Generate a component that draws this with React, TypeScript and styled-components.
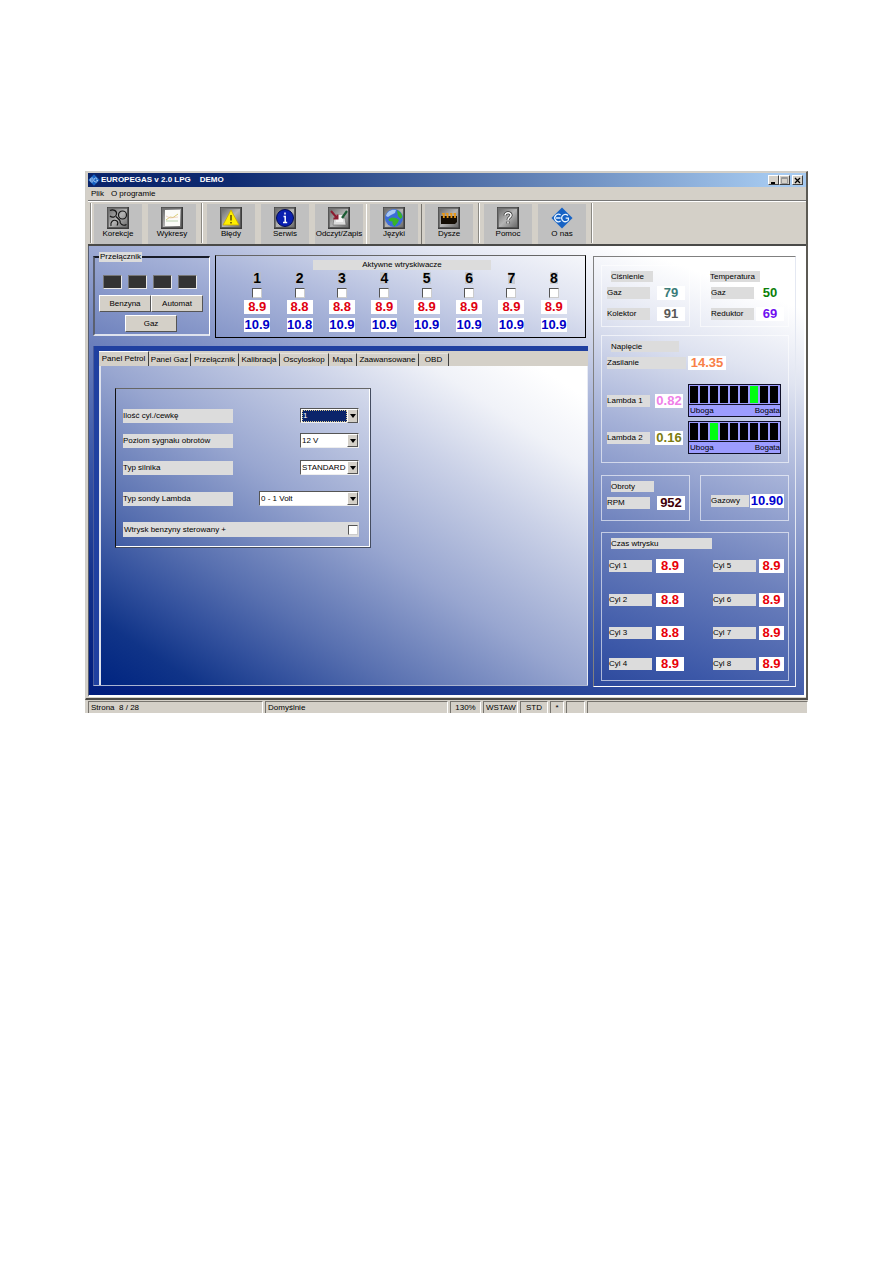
import React from 'react';
import styled, { createGlobalStyle } from 'styled-components';

const face = '#d4d0c8';
const labelGrey = '#dcdcdc';

const GlobalStyle = createGlobalStyle`
  * { box-sizing: border-box; }
  body {
    margin: 0;
    background: #fff;
    color: #000;
    font-family: "Liberation Sans", Arial, sans-serif;
    font-size: 8px;
    line-height: 10px;
  }
  button, select, input { font: inherit; color: inherit; }
`;

const Page = styled.main`
  padding: 171px 85px 40px;
`;

const Window = styled.section`
  background: ${face};
  border: 1px solid #d0cec8;
  border-right: 2px solid #5c5a54;
  border-bottom: 2px solid #4c4a46;
  padding: 1px 0 1px 2px;
`;

const TitleBar = styled.header`
  display: flex;
  align-items: center;
  height: 14px;
  padding: 0 3px 0 0;
  gap: 1px;
  background: linear-gradient(90deg, #0a246a 0%, #0e2a70 20%, #a6caf0 96%);
`;

const Title = styled.h1`
  flex: 1;
  margin: 0;
  font-size: 8px;
  line-height: 12px;
  font-weight: bold;
  color: #fff;
  white-space: pre;
`;

const WindowButtons = styled.div`
  display: flex;
  > :last-child { margin-left: 2px; }
`;

const WindowButton = styled.button`
  display: grid;
  place-items: center;
  width: 11px;
  height: 10px;
  padding: 0;
  background: ${face};
  border: 1px solid;
  border-color: #fff #404040 #404040 #fff;
`;

const MenuBar = styled.nav`
  display: flex;
  gap: 7px;
  height: 14px;
  padding: 2px 3px;
  border-bottom: 1px solid #777;
`;

const MenuLink = styled.a`
  color: #000;
  text-decoration: none;
`;

const Toolbar = styled.div`
  display: flex;
  gap: 6px;
  height: 45px;
  padding: 2px 6px 1px 1px;
  border-top: 1px solid #fff;
  border-bottom: 2px solid #4a4a48;
`;

const ToolSeparator = styled.span`
  width: 2px;
  margin: -1px -2px 0 -1px;
  border-left: 1px solid #8a8882;
  border-right: 1px solid #fff;
  &:first-child { margin: -1px -4px 0 1px; }
`;

const ToolButton = styled.button<{ $raised?: boolean }>`
  display: flex;
  flex-direction: column;
  align-items: center;
  width: 48px;
  height: 40px;
  margin: 0 ${(p) => (p.$raised ? 1 : 0)}px;
  padding: 3px 0 0;
  border: 0;
  background: #c0c0c0;
  box-shadow: ${(p) => (p.$raised
    ? '-3px 0 0 #d4d0c8, 3px 0 0 #d4d0c8, -4px 0 0 #fff, 4px 0 0 #77746e'
    : 'none')};
  font-size: 8px;
  line-height: 10px;
  white-space: nowrap;
  > svg { display: block; flex: none; }
`;

const Workspace = styled.div`
  display: flex;
  align-items: flex-start;
  gap: 5px;
  padding: 6px 8px 8px 4px;
  border-left: 1px solid #555c70;
  border-right: 2px solid #fff;
  border-bottom: 2px solid #fff;
  background: linear-gradient(
    20deg,
    #001c7c 0%, #12308a 16%, #3c58a8 34%, #6c80bc 50%, #a6b2d8 66%, #e0e4f1 80%, #fff 91%
  );
`;

const MainColumn = styled.div`
  flex: 1;
  min-width: 0;
`;

const TopRow = styled.div`
  display: flex;
  align-items: flex-start;
  gap: 5px;
  padding-right: 2px;
`;

const SwitchGroup = styled.fieldset`
  width: 117px;
  margin: 0;
  padding: 13px 6px 2px 4px;
  min-width: 0;
  border: 2px solid;
  border-width: 2px 1px 2px 2px;
  border-color: #181c28 #fff #dfe3ee #5a6070;
`;

const SwitchLegend = styled.legend`
  padding: 0 1px;
  background: ${labelGrey};
`;

const Lamps = styled.div`
  display: flex;
  gap: 6px;
  padding: 0 4px;
`;

const Lamp = styled.span`
  width: 19px;
  height: 14px;
  background: #333;
  border: 1px solid;
  border-color: #777 #e8e8e8 #e8e8e8 #777;
`;

const SwitchButtons = styled.div`
  display: flex;
  flex-wrap: wrap;
  justify-content: center;
  row-gap: 3px;
  padding-top: 6px;
`;

const PushButton = styled.button`
  width: 52px;
  height: 17px;
  padding: 0;
  background: ${face};
  border: 1px solid;
  border-color: #fff #555 #555 #fff;
`;

const Injectors = styled.section`
  flex: 1;
  display: flex;
  flex-direction: column;
  height: 83px;
  margin-top: 3px;
  padding: 4px 10px 0 20px;
  border: 1px solid #000;
  border-top-color: #666;
`;

const InjectorsTitle = styled.h2`
  width: 178px;
  margin: 0 0 0 77px;
  background: ${labelGrey};
  font-size: 8px;
  font-weight: normal;
  line-height: 10px;
  text-align: center;
`;

const InjectorGrid = styled.div`
  display: grid;
  grid-template-columns: repeat(8, 1fr);
`;

const Injector = styled.label`
  display: flex;
  flex-direction: column;
  align-items: center;
`;

const InjectorNumber = styled.span`
  margin: 2px 0 4px;
  background: rgba(190, 190, 190, 0.6);
  font-size: 14px;
  line-height: 12px;
  font-weight: bold;
`;

const Tick = styled.input`
  appearance: none;
  width: 10px;
  height: 10px;
  margin: 0;
  background: #fff;
  border: 1px solid;
  border-color: #555 #ccc #ccc #555;
  &:checked { background: #224; }
`;

const Value = styled.output<{ $color: string; $width?: number }>`
  display: block;
  width: ${(p) => p.$width ?? 28}px;
  height: 14px;
  background: #fff;
  color: ${(p) => p.$color};
  font-size: 13px;
  line-height: 14px;
  font-weight: bold;
  text-align: center;
  white-space: nowrap;
`;

const InjectorValues = styled.span`
  display: grid;
  gap: 4px;
  margin-top: 2px;
`;

const TabPanelFrame = styled.section`
  margin-top: 8px;
  padding: 5px 0 0 5px;
  background: #2040a0;
  border-left: 1px solid #4a5c9c;
  border-bottom: 1px solid #aab4d0;
`;

const TabStrip = styled.div`
  display: flex;
  align-items: flex-end;
  height: 15px;
  background: ${face};
`;

const Tab = styled.button<{ $width: number; $selected?: boolean }>`
  width: ${(p) => p.$width}px;
  height: ${(p) => (p.$selected ? 15 : 13)}px;
  padding: 0;
  border: 0;
  border-right: 1px solid #404040;
  border-top: 1px solid ${(p) => (p.$selected ? '#fff' : '#e4e2dc')};
  background: ${face};
  text-align: center;
  white-space: nowrap;
`;

const TabPanel = styled.div`
  min-height: 319px;
  padding: 22px 14px;
  border-left: 2px solid #dfe3ee;
  border-right: 1px solid #e8ebf4;
  background: linear-gradient(
    to top right,
    #002480 0%, #103488 10%, #34529e 20%, #5870b0 30%, #98a6d0 50%, #cad1e7 70%, #f0f2f8 84%, #fff 95%
  );
`;

const FormBox = styled.form`
  display: grid;
  grid-template-rows: 25px 27px 31px 30px 15px;
  width: 256px;
  padding: 20px 11px 10px 7px;
  border: 1px solid;
  border-color: #666 #444c60 #444c60 #111;
  box-shadow: inset -1px -1px 0 #fff;
`;

const FormRow = styled.div`
  display: flex;
  align-items: flex-start;
  justify-content: space-between;
`;

const FieldLabel = styled.label`
  width: 110px;
  height: 14px;
  background: ${labelGrey};
  line-height: 14px;
  white-space: nowrap;
`;

const TickLabel = styled.label`
  flex: 1;
  display: flex;
  align-items: center;
  justify-content: space-between;
  height: 15px;
  padding: 0 1px;
  background: ${labelGrey};
`;

const SelectFrame = styled.span<{ $width: number }>`
  display: grid;
  grid-template-columns: 1fr 11px;
  width: ${(p) => p.$width}px;
  height: 15px;
  margin-top: -1px;
  background: #fff;
  border: 1px solid;
  border-color: #555 #eee #eee #555;
`;

const SelectBox = styled.select<{ $active?: boolean }>`
  grid-area: 1 / 1 / 2 / 3;
  appearance: none;
  min-width: 0;
  margin: 1px 11px 1px 1px;
  padding: 0;
  border: ${(p) => (p.$active ? '1px dotted #d8c890' : '0')};
  border-radius: 0;
  outline: 0;
  background: ${(p) => (p.$active ? '#0a246a' : '#fff')};
  color: ${(p) => (p.$active ? '#fff' : '#000')};
`;

const SelectArrow = styled.span`
  grid-area: 1 / 2;
  display: grid;
  place-items: center;
  pointer-events: none;
  background: ${face};
  border: 1px solid;
  border-color: #fff #555 #555 #fff;
`;

const Readings = styled.aside`
  display: grid;
  grid-template-columns: 1fr 1fr;
  column-gap: 10px;
  width: 203px;
  margin-top: 4px;
  padding: 8px 6px 5px 7px;
  border: 1px solid;
  border-color: #808080 #e4e8f2 #fff #808080;
`;

const Group = styled.section<{ $wide?: boolean; $height: number; $after?: number }>`
  grid-column: ${(p) => (p.$wide ? '1 / 3' : 'auto')};
  height: ${(p) => p.$height}px;
  margin-bottom: ${(p) => p.$after ?? 0}px;
  padding: 5px 4px 0 5px;
  border: 1px solid rgba(255, 255, 255, 0.6);
`;

const GroupTitle = styled.h2<{ $width: number }>`
  width: ${(p) => p.$width}px;
  margin: 0 0 4px 4px;
  background: ${labelGrey};
  font-size: 8px;
  font-weight: normal;
  line-height: 11px;
`;

const Reading = styled.div<{ $before?: number; $indent?: number }>`
  display: flex;
  align-items: center;
  justify-content: space-between;
  height: 14px;
  margin-top: ${(p) => p.$before ?? 0}px;
  padding-left: ${(p) => p.$indent ?? 0}px;
`;

const ReadingLabel = styled.span<{ $width?: number }>`
  width: ${(p) => p.$width ?? 43}px;
  height: 12px;
  background: ${labelGrey};
  line-height: 12px;
  white-space: nowrap;
`;

const SupplyReading = styled(Reading)`
  justify-content: flex-start;
  gap: 2px;
  margin-bottom: 14px;
`;

const LambdaReading = styled.div`
  display: flex;
  align-items: center;
  gap: 5px;
  height: 33px;
  margin: 0 3px 4px 0;
`;

const Gauge = styled.div`
  flex: 1;
  background: #9c9cff;
  border: 1px solid #101028;
`;

const GaugeCells = styled.div`
  display: grid;
  grid-template-columns: repeat(9, 8px);
  gap: 2px;
  height: 20px;
  padding: 1px;
  border-bottom: 1px solid #101028;
`;

const GaugeCell = styled.span<{ $on: boolean }>`
  background: ${(p) => (p.$on ? '#00ff10' : '#000')};
`;

const GaugeScale = styled.div`
  display: flex;
  justify-content: space-between;
  height: 11px;
  padding-left: 1px;
  line-height: 11px;
`;

const Cylinders = styled.div`
  display: grid;
  grid-template-columns: 75px 71px;
  grid-template-rows: 34px 33px 31px 15px;
  justify-content: space-between;
  padding: 6px 0 0 2px;
`;

const StatusBar = styled.footer`
  display: flex;
  gap: 2px;
  height: 13px;
  padding: 1px 0 0 3px;
  background: ${face};
`;

const StatusCell = styled.span<{ $width?: number; $centered?: boolean }>`
  flex: ${(p) => (p.$width ? 'none' : '1')};
  width: ${(p) => (p.$width ? `${p.$width}px` : 'auto')};
  padding: 0 2px;
  border: 1px solid;
  border-width: 1px 1px 0;
  border-color: #77746e #fff #fff #77746e;
  line-height: 12px;
  text-align: ${(p) => (p.$centered ? 'center' : 'left')};
  white-space: pre;
`;

function EuropegasLogo({ size }: { size: number }) {
  return (
    <svg width={size} height={size} viewBox="0 0 24 24" aria-hidden="true">
      <path d="M12 0.5 L23.5 12 L12 23.5 L0.5 12Z" fill="#1662c4" />
      <path
        d="M10.5 8.8 A4 4 0 1 0 10.5 15.2 M5.5 12 H10.5 M18.5 9.3 A4 4 0 1 0 19 14.2 V12.2 H16"
        fill="none" stroke="#e8f4ff" strokeWidth="1.4"
      />
    </svg>
  );
}

function Tile({ children }: { children: React.ReactNode }) {
  return (
    <svg width="22" height="22" viewBox="0 0 22 22" aria-hidden="true">
      <defs>
        <linearGradient id="tile" x1="0" y1="0" x2="1" y2="1">
          <stop offset="0" stopColor="#6e6e6e" />
          <stop offset="0.5" stopColor="#b4b4b4" />
          <stop offset="1" stopColor="#6a6a6a" />
        </linearGradient>
      </defs>
      <rect width="22" height="22" fill="#3c3c3c" />
      <rect x="0.5" y="0.5" width="20" height="20" fill="#707070" />
      <rect x="2" y="2" width="18" height="18" fill="url(#tile)" />
      {children}
    </svg>
  );
}

const toolIcons: Record<string, React.ReactNode> = {
  corrections: (
    <Tile>
      <g fill="none" stroke="#161616" strokeWidth="1.2">
        <path d="M3 3.5 C6 2 10 3.5 9.5 7 C9 10.5 5 11 3 9" />
        <circle cx="15.5" cy="8" r="4" />
        <path d="M4 19 C3 15 6 12.5 9 13.5 C11.5 14.5 11 17 10 18.5" />
        <path d="M19.5 17.5 C16 19.5 12.5 17 13 13.5 M9 9.5 L13 13.5" />
      </g>
    </Tile>
  ),
  charts: (
    <Tile>
      <rect x="4" y="3" width="15" height="16" fill="#fbfbf8" />
      <path d="M5 13 L9 10 L12 10.5 L17 7" fill="none" stroke="#d9cf78" />
      <path d="M5 14 H17" stroke="#b9d2b0" />
      <path d="M5 9 L9 11 L17 10" fill="none" stroke="#eab8a0" strokeWidth="0.6" />
    </Tile>
  ),
  errors: (
    <Tile>
      <path d="M11 3 L19 18 H3Z" fill="#ffef00" stroke="#c8a800" strokeWidth="0.8" />
      <path d="M11 8 V13.5 M11 15 V16.6" stroke="#5c4a00" strokeWidth="1.5" />
    </Tile>
  ),
  service: (
    <Tile>
      <circle cx="11" cy="11" r="8.5" fill="#0a1fb0" stroke="#020a50" />
      <path d="M11 5.5 V7.5 M9.5 9.5 H11.2 V15 M9 15.4 H13.2" fill="none" stroke="#fff" strokeWidth="1.5" />
    </Tile>
  ),
  readWrite: (
    <Tile>
      <path d="M6 11 H17 L18 18 H5Z" fill="#dcdcdc" stroke="#666" strokeWidth="0.6" />
      <path d="M8 8 H15 V15 H8Z" fill="#f4f4f4" />
      <path d="M3 4 L9 11 M9.5 7.5 V11.5 H5.5" fill="none" stroke="#8c1c30" strokeWidth="2" />
      <path d="M19 4 L14 11" fill="none" stroke="#1c5c34" strokeWidth="2.2" />
    </Tile>
  ),
  languages: (
    <Tile>
      <circle cx="11" cy="11" r="9" fill="#3c6cd8" />
      <path d="M3 9 C4 4 9 2 13 3 L12 6 L8 8 L5 10Z" fill="#a8c8f4" />
      <path d="M5.5 12 L9 10.5 L13 11 L16 13 L14.5 16 L11.5 19.5 L9.5 17 L9.5 14.5 L6 14Z" fill="#38b428" />
      <path d="M14 3 L18 6 L19.5 10 L17.5 12 L15 9Z" fill="#38b428" />
    </Tile>
  ),
  nozzles: (
    <Tile>
      <path d="M3 9 H19 V15 L17 17 H3Z" fill="#140d04" />
      <path d="M5.8 6 V11 M9.6 6 V11 M13.4 6 V11 M17 6 V11" stroke="#e89818" strokeWidth="1.8" />
      <path d="M4 6.8 H6.5 M8 6.8 H10 M12 6.8 H14 M15.5 6.8 H18" stroke="#e89818" strokeWidth="1.4" />
    </Tile>
  ),
  help: (
    <Tile>
      <path d="M8 8.5 C8 4.5 14.5 5 14 8.5 C13.6 10.5 11 10.5 11 13 M11 14.5 V16.5" fill="none" stroke="#333" strokeWidth="3" />
      <path d="M8 8.5 C8 4.5 14.5 5 14 8.5 C13.6 10.5 11 10.5 11 13 M11 14.5 V16.5" fill="none" stroke="#fff" strokeWidth="1.5" />
    </Tile>
  ),
  about: <EuropegasLogo size={22} />,
};

const toolGroups = [
  [['corrections', 'Korekcje'], ['charts', 'Wykresy']],
  [
    ['errors', 'Błędy'], ['service', 'Serwis'], ['readWrite', 'Odczyt/Zapis'],
    ['languages', 'Języki'], ['nozzles', 'Dysze'],
  ],
  [['help', 'Pomoc'], ['about', 'O nas']],
];

const injectors = [
  ['8.9', '10.9'], ['8.8', '10.8'], ['8.8', '10.9'], ['8.9', '10.9'],
  ['8.9', '10.9'], ['8.9', '10.9'], ['8.9', '10.9'], ['8.9', '10.9'],
];

const tabs: [string, number][] = [
  ['Panel Petrol', 50], ['Panel Gaz', 42], ['Przełącznik', 48], ['Kalibracja', 41],
  ['Oscyloskop', 49], ['Mapa', 28], ['Zaawansowane', 62], ['OBD', 30],
];

const fields = [
  { id: 'cyl', label: 'Ilość cyl./cewkę', value: '1', width: 59, active: true },
  { id: 'rpm', label: 'Poziom sygnału obrotów', value: '12 V', width: 59 },
  { id: 'engine', label: 'Typ silnika', value: 'STANDARD', width: 59 },
  { id: 'probe', label: 'Typ sondy Lambda', value: '0 - 1 Volt', width: 100 },
];

const cylinders = [
  ['Cyl 1', '8.9'], ['Cyl 5', '8.9'], ['Cyl 2', '8.8'], ['Cyl 6', '8.9'],
  ['Cyl 3', '8.8'], ['Cyl 7', '8.9'], ['Cyl 4', '8.9'], ['Cyl 8', '8.9'],
];

function Lambda({ label, value, color, level }: { label: string; value: string; color: string; level: number }) {
  return (
    <LambdaReading>
      <ReadingLabel>{label}</ReadingLabel>
      <Value $color={color}>{value}</Value>
      <Gauge>
        <GaugeCells>
          {Array.from({ length: 9 }, (_, i) => <GaugeCell key={i} $on={i === level} />)}
        </GaugeCells>
        <GaugeScale><span>Uboga</span><span>Bogata</span></GaugeScale>
      </Gauge>
    </LambdaReading>
  );
}

export default function App() {
  return (
    <>
      <GlobalStyle />
      <Page>
        <Window>
          <TitleBar>
            <EuropegasLogo size={12} />
            <Title>{'EUROPEGAS v 2.0 LPG    DEMO'}</Title>
            <WindowButtons>
              <WindowButton aria-label="Minimize">
                <svg width="7" height="7"><path d="M1 6 H5" stroke="#000" strokeWidth="2" /></svg>
              </WindowButton>
              <WindowButton aria-label="Maximize">
                <svg width="7" height="7"><path d="M0.5 0.5 H6.5 V6.5 H0.5Z M0 1.5 H7" fill="none" stroke="#999" /></svg>
              </WindowButton>
              <WindowButton aria-label="Close">
                <svg width="7" height="7"><path d="M1 1 L6 6 M6 1 L1 6" stroke="#000" strokeWidth="1.3" /></svg>
              </WindowButton>
            </WindowButtons>
          </TitleBar>
          <MenuBar>
            <MenuLink href="#plik">Plik</MenuLink>
            <MenuLink href="#o-programie">O programie</MenuLink>
          </MenuBar>
          <Toolbar>
            <ToolSeparator />
            {toolGroups.map((group, g) => (
              <React.Fragment key={g}>
                {group.map(([icon, label]) => (
                  <ToolButton key={icon} $raised={icon === 'languages'}>
                    {toolIcons[icon]}
                    <span>{label}</span>
                  </ToolButton>
                ))}
                <ToolSeparator />
              </React.Fragment>
            ))}
          </Toolbar>
          <Workspace>
            <MainColumn>
              <TopRow>
                <SwitchGroup>
                  <SwitchLegend>Przełącznik</SwitchLegend>
                  <Lamps><Lamp /><Lamp /><Lamp /><Lamp /></Lamps>
                  <SwitchButtons>
                    <PushButton>Benzyna</PushButton>
                    <PushButton>Automat</PushButton>
                    <PushButton>Gaz</PushButton>
                  </SwitchButtons>
                </SwitchGroup>
                <Injectors>
                  <InjectorsTitle>Aktywne wtryskiwacze</InjectorsTitle>
                  <InjectorGrid>
                    {injectors.map(([petrol, gas], i) => (
                      <Injector key={i}>
                        <InjectorNumber>{i + 1}</InjectorNumber>
                        <Tick type="checkbox" />
                        <InjectorValues>
                          <Value $color="#e00010" $width={26}>{petrol}</Value>
                          <Value $color="#0000c8" $width={26}>{gas}</Value>
                        </InjectorValues>
                      </Injector>
                    ))}
                  </InjectorGrid>
                </Injectors>
              </TopRow>
              <TabPanelFrame>
                <TabStrip role="tablist">
                  {tabs.map(([name, width], i) => (
                    <Tab key={name} role="tab" aria-selected={i === 0} $width={width} $selected={i === 0}>
                      {name}
                    </Tab>
                  ))}
                </TabStrip>
                <TabPanel role="tabpanel">
                  <FormBox>
                    {fields.map((f) => (
                      <FormRow key={f.id}>
                        <FieldLabel htmlFor={f.id}>{f.label}</FieldLabel>
                        <SelectFrame $width={f.width}>
                          <SelectBox id={f.id} $active={f.active}>
                            <option>{f.value}</option>
                          </SelectBox>
                          <SelectArrow>
                            <svg width="6" height="4"><path d="M0 0 H6 L3 4Z" /></svg>
                          </SelectArrow>
                        </SelectFrame>
                      </FormRow>
                    ))}
                    <FormRow>
                      <TickLabel>
                        Wtrysk benzyny sterowany +
                        <Tick type="checkbox" />
                      </TickLabel>
                    </FormRow>
                  </FormBox>
                </TabPanel>
              </TabPanelFrame>
            </MainColumn>
            <Readings>
              <Group $height={62} $after={8}>
                <GroupTitle $width={42}>Ciśnienie</GroupTitle>
                <Reading>
                  <ReadingLabel>Gaz</ReadingLabel><Value $color="#3c7c78">79</Value>
                </Reading>
                <Reading $before={7}>
                  <ReadingLabel>Kolektor</ReadingLabel><Value $color="#585858">91</Value>
                </Reading>
              </Group>
              <Group $height={62} $after={8}>
                <GroupTitle $width={50}>Temperatura</GroupTitle>
                <Reading $indent={5}>
                  <ReadingLabel>Gaz</ReadingLabel><Value $color="#0a800a">50</Value>
                </Reading>
                <Reading $before={7} $indent={5}>
                  <ReadingLabel>Reduktor</ReadingLabel><Value $color="#7010f0">69</Value>
                </Reading>
              </Group>
              <Group $wide $height={128} $after={12}>
                <GroupTitle $width={68}>Napięcie</GroupTitle>
                <SupplyReading>
                  <ReadingLabel $width={79}>Zasilanie</ReadingLabel>
                  <Value $color="#f88048" $width={38}>14.35</Value>
                </SupplyReading>
                <Lambda label="Lambda 1" value="0.82" color="#f080e8" level={6} />
                <Lambda label="Lambda 2" value="0.16" color="#7c7c10" level={2} />
              </Group>
              <Group $height={46} $after={11}>
                <GroupTitle $width={43}>Obroty</GroupTitle>
                <Reading>
                  <ReadingLabel>RPM</ReadingLabel><Value $color="#400008">952</Value>
                </Reading>
              </Group>
              <Group $height={46} $after={11}>
                <Reading $before={13} $indent={5}>
                  <ReadingLabel $width={38}>Gazowy</ReadingLabel>
                  <Value $color="#0000d0" $width={34}>10.90</Value>
                </Reading>
              </Group>
              <Group $wide $height={149}>
                <GroupTitle $width={101}>Czas wtrysku</GroupTitle>
                <Cylinders>
                  {cylinders.map(([name, time], i) => (
                    <Reading key={name}>
                      <ReadingLabel>{name}</ReadingLabel>
                      <Value $color="#e80008" $width={i % 2 ? 25 : 28}>{time}</Value>
                    </Reading>
                  ))}
                </Cylinders>
              </Group>
            </Readings>
          </Workspace>
        </Window>
        <StatusBar>
          <StatusCell $width={175}>{'Strona  8 / 28'}</StatusCell>
          <StatusCell $width={183}>Domyślnie</StatusCell>
          <StatusCell $width={31} $centered>130%</StatusCell>
          <StatusCell $width={35} $centered>WSTAW</StatusCell>
          <StatusCell $width={28} $centered>STD</StatusCell>
          <StatusCell $width={14} $centered>*</StatusCell>
          <StatusCell $width={19} />
          <StatusCell />
        </StatusBar>
      </Page>
    </>
  );
}
